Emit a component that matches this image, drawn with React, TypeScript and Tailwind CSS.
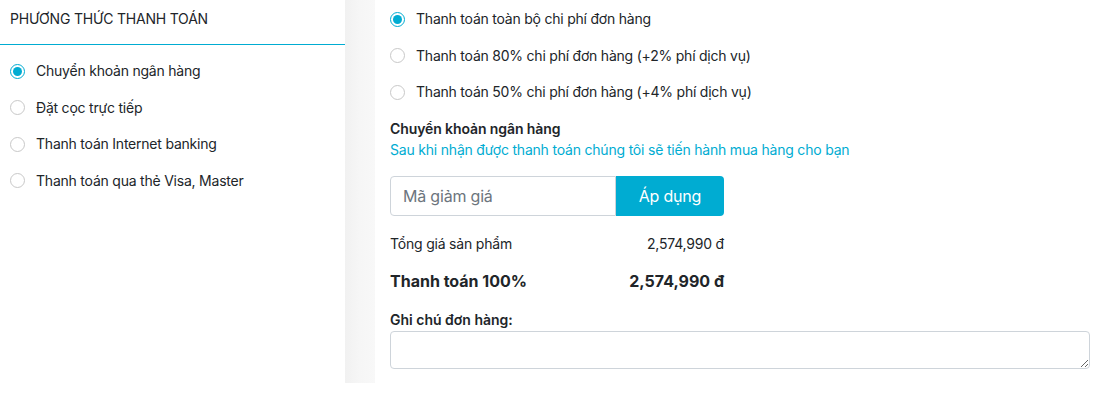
import { useState } from "react";

function Radio({ checked, label, onClick }: { checked: boolean; label: string; onClick: () => void }) {
  return <label onClick={onClick} className="flex cursor-pointer items-center gap-[11px] text-[14px] leading-5 tracking-[-0.22px] text-[#212529]">
    <span className={`flex size-[15px] shrink-0 items-center justify-center rounded-full border ${checked ? "border-[#00acd2] bg-white" : "border-[#c8c8c8] bg-white"}`}>
      {checked && <span className="size-[9px] rounded-full bg-[#00acd2]" />}
    </span>
    <span>{label}</span>
  </label>;
}

export default function App() {
  const [method, setMethod] = useState(0);
  const [plan, setPlan] = useState(0);
  const methods = ["Chuyển khoản ngân hàng", "Đặt cọc trực tiếp", "Thanh toán Internet banking", "Thanh toán qua thẻ Visa, Master"];
  const plans = ["Thanh toán toàn bộ chi phí đơn hàng", "Thanh toán 80% chi phí đơn hàng (+2% phí dịch vụ)", "Thanh toán 50% chi phí đơn hàng (+4% phí dịch vụ)"];

  return <div className="flex h-[409px] w-[1100px] items-start bg-white font-['Inter','Noto_Sans',sans-serif] text-[#212529]">
    <aside className="w-[345px] shrink-0">
      <div className="border-b border-b-[#00acd2] px-[10px] pb-[15px] pt-[9px] text-[14px] leading-5 tracking-[-0.2px] uppercase">Phương thức thanh toán</div>
      <div className="flex flex-col gap-[16.5px] px-[10px] pt-[16px]">
        {methods.map((m, i) => <Radio key={m} label={m} checked={method === i} onClick={() => setMethod(i)} />)}
      </div>
    </aside>
    <div className="h-[383px] w-[30px] shrink-0 bg-gradient-to-r from-[#f1f1f1] via-[#f6f6f6] to-[#f8f8f8]" />
    <main className="flex-1 pl-[15px] pr-[10px] pt-[9px]">
      <div className="flex flex-col gap-[16.5px]">
        {plans.map((p, i) => <Radio key={p} label={p} checked={plan === i} onClick={() => setPlan(i)} />)}
      </div>
      <h4 className="mt-[17px] text-[14px] font-semibold leading-5 tracking-[-0.1px]">Chuyển khoản ngân hàng</h4>
      <p className="mt-[1px] text-[14px] leading-5 tracking-[-0.2px] text-[#00acd2]">Sau khi nhận được thanh toán chúng tôi sẽ tiến hành mua hàng cho bạn</p>
      <div className="mt-[16px] flex h-[40px] w-[334px]">
        <input placeholder="Mã giảm giá" className="h-full w-[226px] rounded-l-[4px] border border-[#ced4da] px-[12px] text-[16px] tracking-[-0.2px] text-[#495057] outline-none placeholder:text-[#6c757d]" />
        <button type="button" className="h-full flex-1 rounded-r-[4px] bg-[#00acd2] text-[16px] tracking-[-0.2px] text-white">Áp dụng</button>
      </div>
      <div className="mt-[18px] flex w-[334px] items-center justify-between text-[14px] leading-5 tracking-[-0.2px]">
        <span>Tổng giá sản phẩm</span><span>2,574,990 đ</span>
      </div>
      <div className="mt-[15px] flex w-[334px] items-center justify-between text-[16px] font-bold leading-6">
        <span>Thanh toán 100%</span><span>2,574,990 đ</span>
      </div>
      <label className="mt-[17px] block text-[14px] font-semibold leading-5">Ghi chú đơn hàng:</label>
      <textarea className="mt-[1px] block h-[38px] w-full rounded-[4px] border border-[#ced4da] px-2 py-1 text-[14px] outline-none" />
    </main>
  </div>;
}
